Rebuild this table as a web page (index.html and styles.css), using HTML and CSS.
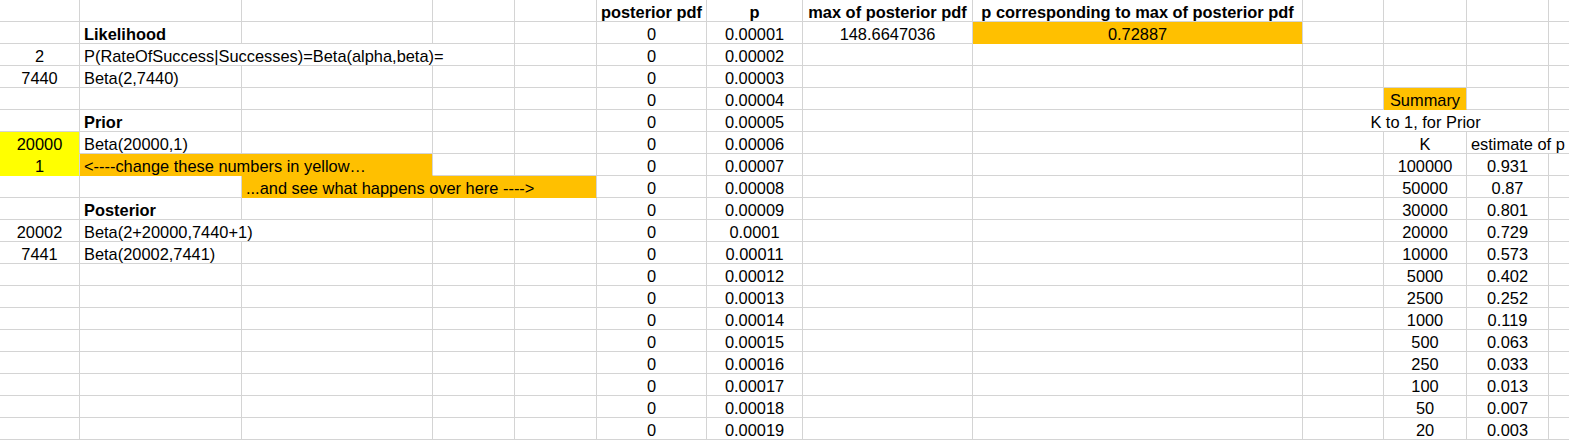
FILE: index.html
```html
<!DOCTYPE html>
<html>
<head>
<meta charset="utf-8">
<link rel="stylesheet" href="styles.css">
</head>
<body>
<div class="sheet">
  <div class="row">
    <div class="c"></div><div class="c"></div><div class="c"></div><div class="c"></div><div class="c"></div>
    <div class="c m b">posterior pdf</div><div class="c m b">p</div><div class="c m b">max of posterior pdf</div><div class="c m b">p corresponding to max of posterior pdf</div>
    <div class="c"></div><div class="c"></div><div class="c"></div><div class="c"></div>
  </div>
  <div class="row">
    <div class="c"></div><div class="c b">Likelihood</div><div class="c"></div><div class="c"></div><div class="c"></div>
    <div class="c m">0</div><div class="c m">0.00001</div><div class="c m">148.6647036</div><div class="c m o">0.72887</div>
    <div class="c"></div><div class="c"></div><div class="c"></div><div class="c"></div>
  </div>
  <div class="row">
    <div class="c m">2</div><div class="c s3">P(RateOfSuccess|Successes)=Beta(alpha,beta)=</div><div class="c"></div>
    <div class="c m">0</div><div class="c m">0.00002</div><div class="c"></div><div class="c"></div>
    <div class="c"></div><div class="c"></div><div class="c"></div><div class="c"></div>
  </div>
  <div class="row">
    <div class="c m">7440</div><div class="c">Beta(2,7440)</div><div class="c"></div><div class="c"></div><div class="c"></div>
    <div class="c m">0</div><div class="c m">0.00003</div><div class="c"></div><div class="c"></div>
    <div class="c"></div><div class="c"></div><div class="c"></div><div class="c"></div>
  </div>
  <div class="row">
    <div class="c"></div><div class="c"></div><div class="c"></div><div class="c"></div><div class="c"></div>
    <div class="c m">0</div><div class="c m">0.00004</div><div class="c"></div><div class="c"></div>
    <div class="c"></div><div class="c m o">Summary</div><div class="c"></div><div class="c"></div>
  </div>
  <div class="row">
    <div class="c"></div><div class="c b">Prior</div><div class="c"></div><div class="c"></div><div class="c"></div>
    <div class="c m">0</div><div class="c m">0.00005</div><div class="c"></div><div class="c"></div>
    <div class="c m s3">K to 1, for Prior</div><div class="c"></div>
  </div>
  <div class="row">
    <div class="c m y">20000</div><div class="c">Beta(20000,1)</div><div class="c"></div><div class="c"></div><div class="c"></div>
    <div class="c m">0</div><div class="c m">0.00006</div><div class="c"></div><div class="c"></div>
    <div class="c"></div><div class="c m">K</div><div class="c s2">estimate of p</div>
  </div>
  <div class="row">
    <div class="c m y">1</div><div class="c s2 o">&lt;----change these numbers in yellow…</div><div class="c"></div><div class="c"></div>
    <div class="c m">0</div><div class="c m">0.00007</div><div class="c"></div><div class="c"></div>
    <div class="c"></div><div class="c m">100000</div><div class="c m">0.931</div><div class="c"></div>
  </div>
  <div class="row">
    <div class="c"></div><div class="c"></div><div class="c s3 o">...and see what happens over here ----&gt;</div>
    <div class="c m">0</div><div class="c m">0.00008</div><div class="c"></div><div class="c"></div>
    <div class="c"></div><div class="c m">50000</div><div class="c m">0.87</div><div class="c"></div>
  </div>
  <div class="row">
    <div class="c"></div><div class="c b">Posterior</div><div class="c"></div><div class="c"></div><div class="c"></div>
    <div class="c m">0</div><div class="c m">0.00009</div><div class="c"></div><div class="c"></div>
    <div class="c"></div><div class="c m">30000</div><div class="c m">0.801</div><div class="c"></div>
  </div>
  <div class="row">
    <div class="c m">20002</div><div class="c s2">Beta(2+20000,7440+1)</div><div class="c"></div><div class="c"></div>
    <div class="c m">0</div><div class="c m">0.0001</div><div class="c"></div><div class="c"></div>
    <div class="c"></div><div class="c m">20000</div><div class="c m">0.729</div><div class="c"></div>
  </div>
  <div class="row">
    <div class="c m">7441</div><div class="c">Beta(20002,7441)</div><div class="c"></div><div class="c"></div><div class="c"></div>
    <div class="c m">0</div><div class="c m">0.00011</div><div class="c"></div><div class="c"></div>
    <div class="c"></div><div class="c m">10000</div><div class="c m">0.573</div><div class="c"></div>
  </div>
  <div class="row">
    <div class="c"></div><div class="c"></div><div class="c"></div><div class="c"></div><div class="c"></div>
    <div class="c m">0</div><div class="c m">0.00012</div><div class="c"></div><div class="c"></div>
    <div class="c"></div><div class="c m">5000</div><div class="c m">0.402</div><div class="c"></div>
  </div>
  <div class="row">
    <div class="c"></div><div class="c"></div><div class="c"></div><div class="c"></div><div class="c"></div>
    <div class="c m">0</div><div class="c m">0.00013</div><div class="c"></div><div class="c"></div>
    <div class="c"></div><div class="c m">2500</div><div class="c m">0.252</div><div class="c"></div>
  </div>
  <div class="row">
    <div class="c"></div><div class="c"></div><div class="c"></div><div class="c"></div><div class="c"></div>
    <div class="c m">0</div><div class="c m">0.00014</div><div class="c"></div><div class="c"></div>
    <div class="c"></div><div class="c m">1000</div><div class="c m">0.119</div><div class="c"></div>
  </div>
  <div class="row">
    <div class="c"></div><div class="c"></div><div class="c"></div><div class="c"></div><div class="c"></div>
    <div class="c m">0</div><div class="c m">0.00015</div><div class="c"></div><div class="c"></div>
    <div class="c"></div><div class="c m">500</div><div class="c m">0.063</div><div class="c"></div>
  </div>
  <div class="row">
    <div class="c"></div><div class="c"></div><div class="c"></div><div class="c"></div><div class="c"></div>
    <div class="c m">0</div><div class="c m">0.00016</div><div class="c"></div><div class="c"></div>
    <div class="c"></div><div class="c m">250</div><div class="c m">0.033</div><div class="c"></div>
  </div>
  <div class="row">
    <div class="c"></div><div class="c"></div><div class="c"></div><div class="c"></div><div class="c"></div>
    <div class="c m">0</div><div class="c m">0.00017</div><div class="c"></div><div class="c"></div>
    <div class="c"></div><div class="c m">100</div><div class="c m">0.013</div><div class="c"></div>
  </div>
  <div class="row">
    <div class="c"></div><div class="c"></div><div class="c"></div><div class="c"></div><div class="c"></div>
    <div class="c m">0</div><div class="c m">0.00018</div><div class="c"></div><div class="c"></div>
    <div class="c"></div><div class="c m">50</div><div class="c m">0.007</div><div class="c"></div>
  </div>
  <div class="row">
    <div class="c"></div><div class="c"></div><div class="c"></div><div class="c"></div><div class="c"></div>
    <div class="c m">0</div><div class="c m">0.00019</div><div class="c"></div><div class="c"></div>
    <div class="c"></div><div class="c m">20</div><div class="c m">0.003</div><div class="c"></div>
  </div>
</div>
</body>
</html>
```
FILE: styles.css
```css
html, body {
  margin: 0;
  padding: 0;
  background: #ffffff;
  overflow: hidden;
}
.sheet {
  font-family: "Liberation Sans", Arial, sans-serif;
  font-size: 16.4px;
  color: #000000;
  width: 1600px;
}
.row {
  display: grid;
  grid-template-columns: 80px 162px 191px 82px 82px 110px 96px 170px 330px 81px 83px 82px 50px;
  height: 22px;
}
.c {
  box-sizing: border-box;
  height: 22px;
  border-right: 1px solid #d4d4d4;
  border-bottom: 1px solid #d4d4d4;
  padding: 2px 3px 0 4px;
  line-height: 20px;
  white-space: nowrap;
  overflow: visible;
}
.m {
  text-align: center;
  padding-left: 0;
  padding-right: 0;
}
.b {
  font-weight: bold;
}
.s2 {
  grid-column: span 2;
}
.s3 {
  grid-column: span 3;
}
.y {
  background: #ffff00;
  border-bottom-color: #ffff00;
}
.o {
  background: #ffc000;
  border-bottom-color: #ffc000;
}
```
